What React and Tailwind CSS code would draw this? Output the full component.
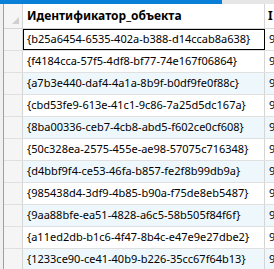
import React from 'react';

const ids = [
  '{b25a6454-6535-402a-b388-d14ccab8a638}',
  '{f4184cca-57f5-4df8-bf77-74e167f06864}',
  '{a7b3e440-daf4-4a1a-8b9f-b0df9fe0f88c}',
  '{cbd53fe9-613e-41c1-9c86-7a25d5dc167a}',
  '{8ba00336-ceb7-4cb8-abd5-f602ce0cf608}',
  '{50c328ea-2575-455e-ae98-57075c716348}',
  '{d4bbf9f4-ce53-46fa-b857-fe2f8b99db9a}',
  '{985438d4-3df9-4b85-b90a-f75de8eb5487}',
  '{9aa88bfe-ea51-4828-a6c5-58b505f84f6f}',
  '{a11ed2db-b1c6-4f47-8b4c-e47e9e27dbe2}',
  '{1233ce90-ce41-40b9-b226-35cc67f64b13}',
  '{6c7e0d86-d84e-4d40-86775-f516865}',
];

export default function App() {
  return (
    <div className="w-[274px] h-[269px] overflow-hidden bg-[#f0f0f0] text-[11px] text-black" style={{ fontFamily: '"Noto Sans", sans-serif' }}>
      <div className="flex h-[4px]">
        <div className="w-[222px] bg-[#0a7fd8]" />
        <div className="flex-1 bg-[#e6e6e6]" />
      </div>
      <div className="flex h-[265px] border-l-[3px] border-[#f0f0f0]">
        <div className="border-l border-[#a0a0a0] flex-1 bg-white overflow-hidden">
          <div className="flex h-[25px] border-b border-[#d5d5d5] bg-white">
            <div className="w-[19px] shrink-0 border-r border-[#d5d5d5] bg-[#f5f5f5] relative">
              <div className="absolute right-[3px] bottom-[4px] w-0 h-0 border-l-[7px] border-l-transparent border-b-[7px] border-b-[#d0d0d0]" />
            </div>
            <div className="w-[242px] shrink-0 border-r border-[#d5d5d5] pl-[4px] flex items-center font-bold text-[12px]">Идентификатор_объекта</div>
            <div className="flex-1 pl-[3px] flex items-center font-bold text-[12px]">I</div>
          </div>
          {ids.map((id, i) => (
            <div key={id} className={`flex h-[22px] border-b border-[#e0e0e0] ${i % 2 === 0 && i > 0 ? 'bg-[#eef8fc]' : 'bg-white'}`}>
              <div className="w-[19px] shrink-0 border-r border-[#d5d5d5] bg-[#f5f5f5]" />
              <div className={`w-[242px] shrink-0 border-r border-[#d5d5d5] pl-[4px] flex items-center whitespace-nowrap overflow-hidden ${i === 0 ? 'outline outline-1 outline-black -outline-offset-1' : ''}`}>{id}</div>
              <div className="flex-1 pl-[4px] flex items-center">9</div>
            </div>
          ))}
        </div>
      </div>
    </div>
  );
}
